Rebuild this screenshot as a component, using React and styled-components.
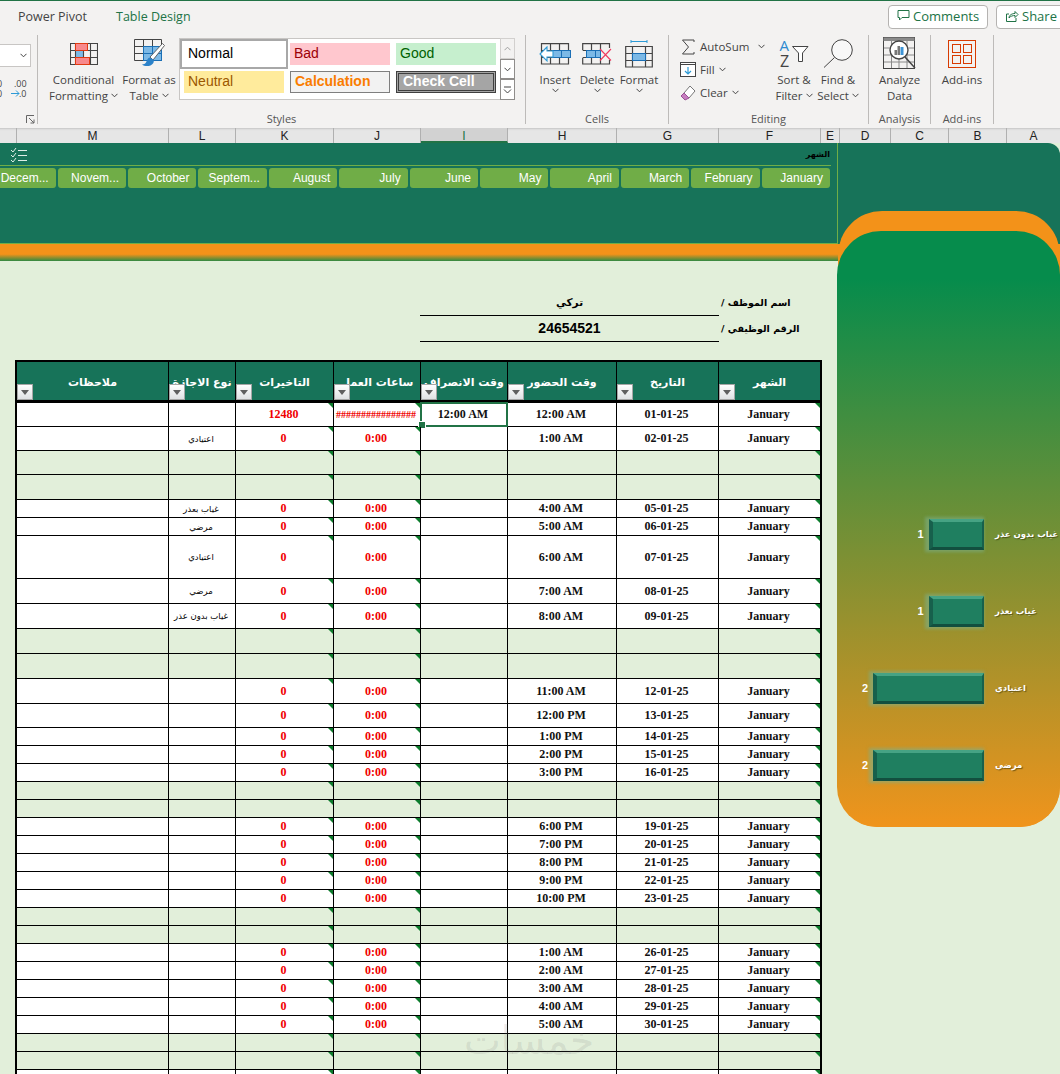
import React from 'react';
import styled, { createGlobalStyle } from 'styled-components';

const GlobalStyle = createGlobalStyle`
  html, body {
    margin: 0;
    padding: 0;
    background: #e2efda;
  }
  * {
    box-sizing: border-box;
  }
`;

const ARABIC = '"DejaVu Sans", sans-serif';
const UI = '"Open Sans", "Noto Sans", sans-serif';

const Page = styled.div`
  width: 1060px;
  height: 1074px;
  overflow: hidden;
  display: flex;
  flex-direction: column;
  font-family: "Liberation Sans", sans-serif;
`;

/* ---------- ribbon ---------- */

const Ribbon = styled.div`
  height: 128px;
  flex: none;
  background: #f3f2f1;
  border-top: 1px solid #217346;
  font-family: ${UI};
  font-size: 11.5px;
  color: #444;
`;

const TabBar = styled.div`
  height: 31px;
  display: flex;
  align-items: center;
  padding-left: 18px;
`;

const Tab = styled.span`
  font-size: 12.5px;
  margin-right: 29px;
  color: ${(p) => (p.$active ? '#217346' : '#444')};
`;

const TabActions = styled.div`
  margin-left: auto;
  display: flex;
  gap: 8px;
  margin-right: -20px;
`;

const ActionButton = styled.div`
  width: ${(p) => p.$w}px;
  height: 24px;
  display: flex;
  align-items: center;
  gap: 3px;
  padding: 0 0 2px 8px;
  background: #fff;
  border: 1px solid #b5b3b1;
  border-radius: 4px;
  color: #217346;
  font-size: 13px;
`;

const Toolbar = styled.div`
  display: flex;
  padding-top: 3px;
`;

const Group = styled.div`
  width: ${(p) => p.$w}px;
  height: 89px;
  flex: none;
  position: relative;
  display: flex;
  flex-direction: column;
  border-right: 1px solid #bdbbb9;
`;

const GroupBody = styled.div`
  flex: 1;
  display: flex;
  padding-left: ${(p) => p.$pad || 0}px;
`;

const GroupLabel = styled.div`
  height: 11px;
  text-align: center;
  font-size: 11px;
  line-height: 11px;
  color: #555;
`;

const Launcher = styled.svg`
  position: absolute;
  right: 2px;
  bottom: 0;
`;

const BigButton = styled.div`
  width: ${(p) => p.$w}px;
  flex: none;
  display: flex;
  flex-direction: column;
  align-items: center;
  text-align: center;
  line-height: 16px;
  white-space: nowrap;
`;

const IconSlot = styled.div`
  height: 37px;
  display: flex;
  align-items: center;
  justify-content: center;
`;

const SmallStack = styled.div`
  width: 92px;
  flex: none;
  display: flex;
  flex-direction: column;
`;

const SmallRow = styled.div`
  height: 23px;
  display: flex;
  align-items: center;
  gap: 4px;
  white-space: nowrap;
`;

const SmallIcon = styled.span`
  width: 16px;
  display: flex;
  justify-content: center;
`;

const Caret = styled.svg`
  margin-left: ${(p) => p.$gap ?? 3}px;
  vertical-align: 2px;
`;

const NumberColumn = styled.div`
  display: flex;
  flex-direction: column;
  gap: 11px;
  padding-top: 9px;
`;

const NumberBox = styled.div`
  width: 31px;
  height: 23px;
  background: #fff;
  border: 1px solid #c8c6c4;
  border-left: none;
  display: flex;
  align-items: center;
  justify-content: flex-end;
  padding-right: 3px;
`;

const Gallery = styled.div`
  width: 321px;
  height: 62px;
  margin: 3px 0 0 3px;
  padding: 4px 0 0 4px;
  background: #fff;
  border: 1px solid #c8c6c4;
  border-right: none;
  display: grid;
  grid-template-columns: 100px 100px 100px;
  grid-auto-rows: 22px;
  column-gap: 6px;
  row-gap: 6px;
`;

const StyleChip = styled.div`
  display: flex;
  align-items: center;
  padding: 0 0 2px 4px;
  font-family: "Liberation Sans", sans-serif;
  font-size: 14px;
  font-weight: ${(p) => (p.$bold ? 700 : 400)};
  color: ${(p) => p.$color};
  background: ${(p) => p.$bg};
  border: ${(p) => p.$border || 'none'};
  box-shadow: ${(p) => p.$shadow || 'none'};
`;

const GalleryScroll = styled.div`
  width: 15px;
  height: 62px;
  margin-top: 3px;
  display: flex;
  flex-direction: column;
`;

const ScrollButton = styled.div`
  flex: 1;
  display: flex;
  align-items: center;
  justify-content: center;
  background: ${(p) => (p.$off ? '#f3f2f1' : '#fff')};
  border: 1px solid;
  border-color: ${(p) => (p.$off ? '#d2d0ce' : '#8f8d8b')};
`;

/* ---------- column letters ---------- */

const ColumnBar = styled.div`
  height: 15px;
  flex: none;
  display: flex;
  overflow: hidden;
  background: #e6e6e6;
  box-shadow: inset 0 3px 2px -2px #c4c4c4;
`;

const ColumnLetter = styled.div`
  width: ${(p) => p.$w}px;
  flex: none;
  border-right: 1px solid #b0b0b0;
  text-align: center;
  font-size: 12px;
  line-height: 17px;
  color: ${(p) => (p.$active ? '#217346' : '#222')};
  background: ${(p) => (p.$active ? '#d2d2d2' : 'transparent')};
  border-bottom: ${(p) => (p.$active ? '2px solid #217346' : 'none')};
`;

/* ---------- sheet ---------- */

const Sheet = styled.div`
  flex: 1;
  position: relative;
  background: #e2efda;
`;

const Banner = styled.div`
  height: 101px;
  background: #177359;
  border-top-right-radius: 12px;
`;

const Slicer = styled.div`
  width: 838px;
  height: 101px;
  border-right: 1px solid #70ad47;
  border-bottom: 1px solid #70ad47;
  overflow: hidden;
`;

const SlicerHead = styled.div`
  height: 23px;
  margin-right: 6px;
  display: flex;
  align-items: center;
  justify-content: space-between;
  padding: 0 1px 0 11px;
  border-bottom: 1px solid #70ad47;
`;

const SlicerTitle = styled.span`
  font-family: ${ARABIC};
  font-size: 8px;
  font-weight: 700;
  color: #000;
`;

const SlicerButtons = styled.div`
  display: flex;
  justify-content: flex-end;
  gap: 2px;
  padding: 2px 7px 0 0;
`;

const MonthButton = styled.div`
  width: 68.4px;
  height: 20px;
  flex: none;
  border-radius: 3px;
  background: #70ad47;
  color: #fff;
  font-size: 12px;
  line-height: 20px;
  text-align: right;
  padding-right: 7px;
  white-space: nowrap;
`;

const Stripe = styled.div`
  height: 17px;
  background: linear-gradient(#f39219 0, #f39219 60%, #2f8a43 100%);
`;

const Main = styled.div`
  padding-top: 29px;
`;

const InfoBlock = styled.div`
  margin: 0 0 18px 420px;
`;

const InfoRow = styled.div`
  height: 26px;
  display: flex;
  align-items: center;
`;

const InfoValue = styled.div`
  width: 299px;
  height: 26px;
  border-bottom: 1px solid #000;
  text-align: center;
  line-height: 24px;
  font-weight: 700;
  font-family: ${(p) => (p.$arabic ? ARABIC : '"Liberation Sans", sans-serif')};
  font-size: ${(p) => (p.$arabic ? 10.5 : 14)}px;
`;

const InfoLabel = styled.span`
  margin: 0 0 2px 2px;
  font-family: ${ARABIC};
  font-size: 9.5px;
  font-weight: 700;
  color: #000;
`;

const Table = styled.div`
  width: 807px;
  margin-left: 15px;
  border: 2px solid #000;
  border-bottom: none;
`;

const COLUMNS = '152px 67px 98px 87px 87px 109px 102px 101px';

const HeadRow = styled.div`
  display: grid;
  grid-template-columns: ${COLUMNS};
  height: 41px;
  background: #177359;
  border-bottom: 3px solid #000;
`;

const HeadCell = styled.div`
  position: relative;
  overflow: hidden;
  border-right: ${(p) => (p.$last ? 'none' : '1px solid #000')};
  display: flex;
  align-items: center;
  justify-content: center;
  padding-top: 3px;
  color: #fff;
  font-family: ${ARABIC};
  font-size: 11px;
  font-weight: 700;
  white-space: nowrap;
`;

const FilterButton = styled.div`
  position: absolute;
  left: 0;
  bottom: 0;
  width: 16px;
  height: 16px;
  display: flex;
  align-items: center;
  justify-content: center;
  background: linear-gradient(#fff, #dfe1e3);
  border: 1px solid #a6a6a6;

  &::after {
    content: '';
    border-left: 4px solid transparent;
    border-right: 4px solid transparent;
    border-top: 5px solid #5f5f5f;
  }
`;

const BodyRow = styled.div`
  display: grid;
  grid-template-columns: ${COLUMNS};
  height: ${(p) => p.$h}px;
  background: ${(p) => (p.$blank ? 'transparent' : '#fff')};
  border-bottom: 1px solid #000;
`;

const Cell = styled.div`
  position: relative;
  border-right: ${(p) => (p.$last ? 'none' : '1px solid #000')};
  display: flex;
  align-items: center;
  justify-content: center;
  padding-right: 2px;
  white-space: nowrap;
  overflow: ${(p) => (p.$selected ? 'visible' : 'hidden')};
  font-family: "Liberation Serif", serif;
  font-size: 12px;
  font-weight: 700;
  color: ${(p) => (p.$red ? '#f00000' : '#111')};

  ${(p) =>
    p.$flag &&
    `
    &::before {
      content: '';
      position: absolute;
      top: 0;
      right: 0;
      border-top: 5px solid #0c7c2c;
      border-left: 5px solid transparent;
    }
  `}
`;

const TypeText = styled.span`
  font-family: ${ARABIC};
  font-size: 8.5px;
  font-weight: 400;
  color: #000;
`;

const Hashes = styled.span`
  font-size: 10px;
`;

const Selection = styled.div`
  position: absolute;
  inset: -1px;
  border: 2px solid #217346;

  &::after {
    content: '';
    position: absolute;
    left: -4px;
    bottom: -4px;
    width: 6px;
    height: 6px;
    background: #217346;
    border: 1px solid #fff;
  }
`;

const Watermark = styled.div`
  position: absolute;
  left: 464px;
  top: 870px;
  font-family: ${ARABIC};
  font-size: 39px;
  line-height: 56px;
  color: rgba(110, 110, 110, 0.15);
  pointer-events: none;
`;

/* ---------- side panel ---------- */

const SidePanel = styled.div`
  position: absolute;
  left: 838px;
  top: 68px;
  width: 222px;
  height: 616px;
  background: #f39219;
  border-radius: 44px 44px 40px 40px;
  padding-top: 20px;
`;

const SideInner = styled.div`
  height: 596px;
  margin-left: -1px;
  padding-top: 288px;
  background: linear-gradient(#068c4c 8%, #f0941c 100%);
  border-radius: 44px 44px 40px 40px;
  display: flex;
  flex-direction: column;
  gap: 47px;
`;

const BarRow = styled.div`
  height: 30px;
  display: flex;
  align-items: center;
`;

const BarTrack = styled.div`
  width: 147px;
  flex: none;
  display: flex;
  align-items: center;
  justify-content: flex-end;
  gap: 5px;
`;

const BarCount = styled.span`
  color: #fff;
  font-size: 11px;
  font-weight: 700;
`;

const Bar = styled.div`
  height: 31px;
  background: #1f7f60;
  border-style: solid;
  border-width: 3px 2px 3px 4px;
  border-color: #46a384 #17604c #124f3f #17604c;
  box-shadow: -2px 0 3px 2px rgba(125, 175, 135, 0.6);
`;

const BarLabel = styled.span`
  margin-left: 11px;
  font-family: ${ARABIC};
  font-size: 8.5px;
  font-weight: 700;
  color: #fff;
  text-shadow: 1px 1px 1px rgba(40, 40, 0, 0.55);
  white-space: nowrap;
`;

/* ---------- icons ---------- */

const INK = '#444';
const BLUE = '#7cb9e6';
const BLUE_LINE = '#1b6fb5';

const Chevron = ({ gap, color = INK }) => (
  <Caret $gap={gap} width="7" height="5" viewBox="0 0 7 5">
    <path d="M.5.8 3.5 3.8 6.5.8" fill="none" stroke={color} strokeWidth="1" />
  </Caret>
);

const CondIcon = () => (
  <svg width="28" height="22" viewBox="0 0 28 22">
    <rect x="5.5" y="7.5" width="8" height="7" fill={BLUE} />
    <path d="M.5.500H27.500V21.500H.5ZM.5 7.500H27.500M.5 14.500H27.500M5.500.5V21.500M13.500.5V21.500M20.500.5V21.500" fill="none" stroke={INK} strokeWidth="1.100" />
    <rect x="5.5" y=".5" width="12" height="7" fill="#f8898c" stroke="#e03a12" />
    <rect x="5.5" y="14.5" width="14" height="7" fill="#f8898c" stroke="#e03a12" />
  </svg>
);

const TableIcon = () => (
  <svg width="31" height="29" viewBox="0 0 31 29">
    <path d="M9.500.5V21.500M18.500.5V7M.5 7.500H9M.5 14.500H9M.5.5H27.500V7" fill="none" stroke={INK} />
    <path d="M.5.5V21.500H9.500" fill="none" stroke={INK} />
    <rect x="9.500" y="7.500" width="18" height="14" fill={BLUE} stroke={BLUE_LINE} />
    <path d="M18.500 7.500V21.500M9.500 14.500H27.500" stroke={BLUE_LINE} fill="none" />
    <path d="M28.500 4.500 16 18l3 3L30.500 6.500Z" fill="#fff" stroke="#555" strokeWidth=".9" />
    <path d="M15.500 18.500c-2 .5-2.500 3-3.500 5-.5 1-2.500 2-4 2 3 2.500 9 2 11-1 1-1.500 1-3 .5-4Z" fill="#2c82c9" />
  </svg>
);

const InsertIcon = () => (
  <svg width="32" height="22" viewBox="0 0 32 22">
    <path d="M2.500.7H29.500V21H2.500ZM11.500.7V21M20.500.7V21M2.500 7.500H29.500M2.500 14.500H29.500" fill="none" stroke={INK} strokeWidth="1.200" />
    <rect x="13.500" y="7.500" width="18" height="7" fill={BLUE} stroke={BLUE_LINE} />
    <path d="M22.500 7.500V14.500" stroke={BLUE_LINE} />
    <path d="M8 4 1 11l7 7V14H14V8H8Z" fill="#fff" stroke="#2c9ad6" strokeWidth="1.100" />
  </svg>
);

const DeleteIcon = () => (
  <svg width="30" height="22" viewBox="0 0 30 22">
    <path d="M.7 7V.7H27.500V5M.7 15V21H27.500V17M9.500.7V7M18.500.7V7M9.500 15V21M18.500 15V21M.7 7.500H4M.7 14.500H4" fill="none" stroke={INK} strokeWidth="1.200" />
    <rect x="4.500" y="7.500" width="14" height="7" fill={BLUE} stroke={BLUE_LINE} />
    <path d="M13.500 7.500V14.500" stroke={BLUE_LINE} />
    <path d="M18 6 29 17.500M29 6 18 17.500" stroke="#f03a5f" strokeWidth="1.100" />
  </svg>
);

const FormatIcon = () => (
  <svg width="28" height="28" viewBox="0 0 28 28">
    <path d="M6 1.500H22M6 0v3M22 0v3" stroke="#2c9ad6" fill="none" />
    <path d="M.7 6.500H27.300V27H.7ZM7.500 6.500V27M20.500 6.500V27M.7 13.500H27.300M.7 20.500H27.300" fill="none" stroke={INK} strokeWidth="1.200" />
    <rect x="7.500" y="13.500" width="13" height="7" fill={BLUE} stroke={BLUE_LINE} />
  </svg>
);

const SigmaIcon = () => (
  <svg width="14" height="16" viewBox="0 0 14 16">
    <path d="M13 3V1H1.500L7.500 8 1.500 15H13V13" fill="none" stroke={INK} />
  </svg>
);

const FillIcon = () => (
  <svg width="16" height="15" viewBox="0 0 16 15">
    <rect x=".5" y=".5" width="15" height="14" fill="#fff" stroke={INK} />
    <path d="M.5 2.500H15.500" stroke={INK} />
    <path d="M8 5v6.500M5 9l3 3 3-3" fill="none" stroke="#2c9ad6" strokeWidth="1.200" />
  </svg>
);

const ClearIcon = () => (
  <svg width="16" height="16" viewBox="0 0 16 16">
    <path d="M10 1 15 6 9 13 4 8Z" fill="#fff" stroke="#777" />
    <path d="M4 8 1 11l4 4 4-2Z" fill="#c77fc0" stroke="#9b4f96" />
    <path d="M4 8l5 5" stroke="#9b4f96" />
  </svg>
);

const SortIcon = () => (
  <svg width="30" height="29" viewBox="0 0 30 29">
    <text x="0.500" y="12" fontFamily="Open Sans, sans-serif" fontSize="15" fill="#2c8ad0">A</text>
    <text x="1" y="28" fontFamily="Open Sans, sans-serif" fontSize="16" fill={INK}>Z</text>
    <path d="M13.500 7.500H29L23.500 14V22.500H19.500V14Z" fill="#fff" stroke={INK} />
  </svg>
);

const FindIcon = () => (
  <svg width="31" height="29" viewBox="0 0 31 29">
    <circle cx="19" cy="11" r="10.300" fill="#f8f8f8" stroke={INK} />
    <path d="M11.500 18.500 1 28.500" stroke={INK} />
  </svg>
);

const AnalyzeIcon = () => (
  <svg width="33" height="33" viewBox="0 0 33 33">
    <rect x=".5" y=".5" width="31" height="31" fill="#f3f2f1" stroke={INK} />
    <rect x=".5" y=".5" width="31" height="3.500" fill="#8a8a8a" />
    <path d="M8.500 4V31M16 4V31M24 4V31M1 11H31M1 18H31M1 25H31" stroke="#8a8a8a" fill="none" />
    <circle cx="16" cy="13" r="9" fill="#fff" stroke={INK} strokeWidth="1.400" />
    <rect x="11.500" y="13" width="2.500" height="5" fill="#777" />
    <rect x="14.500" y="9" width="2.500" height="9" fill="#777" />
    <rect x="17.500" y="10" width="3" height="8" fill="#3d94d6" />
    <path d="M22 20 32 31" stroke={INK} strokeWidth="1.500" />
  </svg>
);

const AddInsIcon = () => (
  <svg width="28" height="28" viewBox="0 0 28 28">
    <rect x=".5" y=".5" width="27" height="27" fill="none" stroke="#d83b01" />
    <rect x="4.500" y="4.500" width="8" height="8" fill="none" stroke="#d83b01" />
    <rect x="15.500" y="4.500" width="8" height="8" fill="none" stroke="#d83b01" />
    <rect x="4.500" y="15.500" width="8" height="8" fill="none" stroke="#d83b01" />
    <rect x="15.500" y="15.500" width="8" height="8" fill="none" stroke="#d83b01" />
  </svg>
);

const CommentIcon = () => (
  <svg width="13" height="13" viewBox="0 0 13 13">
    <path d="M1 1.500H12V8.500H5L2.500 11V8.500H1Z" fill="none" stroke="#217346" />
  </svg>
);

const ShareIcon = () => (
  <svg width="14" height="14" viewBox="0 0 14 14">
    <path d="M4 5H1.500V12.500H11V9" fill="none" stroke="#217346" />
    <path d="M4 9c0-3 3-4.500 6-4.500V2.500L13 5.500 10 8.500V6.500C8 6.500 5.500 7 4 9Z" fill="none" stroke="#217346" />
  </svg>
);

const DecimalIcon = () => (
  <svg width="31" height="22" viewBox="0 0 31 22">
    <text x="-3" y="9" fontSize="9" fontFamily="Open Sans, sans-serif" fill={INK}>0</text>
    <text x="-3" y="19" fontSize="9" fontFamily="Open Sans, sans-serif" fill={INK}>0</text>
    <text x="14" y="9" fontSize="9" fontFamily="Open Sans, sans-serif" fill={INK}>.00</text>
    <text x="19" y="19" fontSize="9" fontFamily="Open Sans, sans-serif" fill={INK}>.0</text>
    <path d="M11 15.500H19M16 12.500l3 3-3 3" fill="none" stroke="#2c9ad6" />
  </svg>
);

const ChecklistIcon = () => (
  <svg width="16" height="15" viewBox="0 0 16 15">
    <path d="M0 3l2 2 3-4M0 8l2 2 3-4M0 13l2 2 3-4" fill="none" stroke="#dfeee6" />
    <path d="M7 3.500H16M7 8.500H16M7 13.500H16" stroke="#dfeee6" />
  </svg>
);

/* ---------- data ---------- */

const LETTERS = [
  ['', 17], ['M', 152], ['L', 67], ['K', 98], ['J', 87], ['I', 87], ['H', 109],
  ['G', 102], ['F', 102], ['E', 19], ['D', 51], ['C', 58], ['B', 58], ['A', 54],
];

const MONTHS = [
  'Decem...', 'Novem...', 'October', 'Septem...', 'August', 'July', 'June',
  'May', 'April', 'March', 'February', 'January',
];

const HEADERS = [
  'ملاحظات', 'نوع الاجازة', 'التاخيرات', 'ساعات العمل', 'وقت الانصراف',
  'وقت الحضور', 'التاريخ', 'الشهر',
];

const day = (h, date, time, type = '') => ({ h, date, time, type });
const blank = (h) => ({ h, blank: true });

const ROWS = [
  { h: 24, date: '01-01-25', time: '12:00 AM', out: '12:00 AM', hours: '################', late: '12480' },
  day(24, '02-01-25', '1:00 AM', 'اعتيادي'),
  blank(24),
  blank(25),
  day(18, '05-01-25', '4:00 AM', 'غياب بعذر'),
  day(18, '06-01-25', '5:00 AM', 'مرضي'),
  day(43, '07-01-25', '6:00 AM', 'اعتيادي'),
  day(25, '08-01-25', '7:00 AM', 'مرضي'),
  day(25, '09-01-25', '8:00 AM', 'غياب بدون عذر'),
  blank(25),
  blank(25),
  day(25, '12-01-25', '11:00 AM'),
  day(24, '13-01-25', '12:00 PM'),
  day(18, '14-01-25', '1:00 PM'),
  day(18, '15-01-25', '2:00 PM'),
  day(18, '16-01-25', '3:00 PM'),
  blank(18),
  blank(18),
  day(18, '19-01-25', '6:00 PM'),
  day(18, '20-01-25', '7:00 PM'),
  day(18, '21-01-25', '8:00 PM'),
  day(18, '22-01-25', '9:00 PM'),
  day(18, '23-01-25', '10:00 PM'),
  blank(18),
  blank(18),
  day(18, '26-01-25', '1:00 AM'),
  day(18, '27-01-25', '2:00 AM'),
  day(18, '28-01-25', '3:00 AM'),
  day(18, '29-01-25', '4:00 AM'),
  day(18, '30-01-25', '5:00 AM'),
  blank(18),
  blank(18),
  { h: 20 },
];

const BARS = [
  ['غياب بدون عذر', 1],
  ['غياب بعذر', 1],
  ['اعتيادي', 2],
  ['مرضي', 2],
];

function Row({ row, first }) {
  const filled = row.date !== undefined;
  return (
    <BodyRow $h={row.h} $blank={row.blank}>
      <Cell />
      <Cell>{row.type && <TypeText dir="rtl">{row.type}</TypeText>}</Cell>
      <Cell $flag $red>{filled && (row.late || '0')}</Cell>
      <Cell $flag $red>
        {filled && (row.hours ? <Hashes>{row.hours}</Hashes> : '0:00')}
      </Cell>
      <Cell $selected={first}>
        {row.out}
        {first && <Selection />}
      </Cell>
      <Cell>{row.time}</Cell>
      <Cell>{row.date}</Cell>
      <Cell $flag $last>{filled && 'January'}</Cell>
    </BodyRow>
  );
}

export default function App() {
  return (
    <Page>
      <GlobalStyle />
      <Ribbon>
        <TabBar>
          <Tab>Power Pivot</Tab>
          <Tab $active>Table Design</Tab>
          <TabActions>
            <ActionButton $w={100}><CommentIcon />Comments</ActionButton>
            <ActionButton $w={84}><ShareIcon />Share</ActionButton>
          </TabActions>
        </TabBar>
        <Toolbar>
          <Group $w={38}>
            <GroupBody>
              <NumberColumn>
                <NumberBox><Chevron gap={0} /></NumberBox>
                <DecimalIcon />
              </NumberColumn>
            </GroupBody>
            <Launcher width="9" height="9" viewBox="0 0 9 9">
              <path d="M.5 8V.5H8M3 3l5 5M8 4.500V8H4.500" fill="none" stroke="#666" />
            </Launcher>
          </Group>

          <Group $w={488}>
            <GroupBody $pad={7}>
              <BigButton $w={77}>
                <IconSlot><CondIcon /></IconSlot>
                Conditional
                <span>Formatting<Chevron /></span>
              </BigButton>
              <BigButton $w={54}>
                <IconSlot><TableIcon /></IconSlot>
                Format as
                <span>Table<Chevron /></span>
              </BigButton>
              <Gallery>
                <StyleChip $color="#000" $bg="#fff" $shadow="0 0 0 2px #fff, 0 0 0 4px #a8a8a8">Normal</StyleChip>
                <StyleChip $color="#9c0006" $bg="#ffc7ce">Bad</StyleChip>
                <StyleChip $color="#006100" $bg="#c6efce">Good</StyleChip>
                <StyleChip $color="#9c5700" $bg="#ffeb9c">Neutral</StyleChip>
                <StyleChip $color="#fa7d00" $bg="#f2f2f2" $bold $border="1px solid #7f7f7f">Calculation</StyleChip>
                <StyleChip $color="#fff" $bg="#a5a5a5" $bold $border="3px double #3f3f3f">Check Cell</StyleChip>
              </Gallery>
              <GalleryScroll>
                <ScrollButton $off>
                  <Caret $gap={0} width="7" height="5" viewBox="0 0 7 5">
                    <path d="M.5 4.200 3.500 1.200 6.500 4.200" fill="none" stroke="#a0a0a0" />
                  </Caret>
                </ScrollButton>
                <ScrollButton><Chevron gap={0} /></ScrollButton>
                <ScrollButton>
                  <Caret $gap={0} width="9" height="8" viewBox="0 0 9 8">
                    <path d="M1 1H8M1 3.500 4.500 7 8 3.500" fill="none" stroke={INK} />
                  </Caret>
                </ScrollButton>
              </GalleryScroll>
            </GroupBody>
            <GroupLabel>Styles</GroupLabel>
          </Group>

          <Group $w={143}>
            <GroupBody $pad={8}>
              <BigButton $w={42}>
                <IconSlot><InsertIcon /></IconSlot>
                Insert
                <Chevron gap={0} />
              </BigButton>
              <BigButton $w={42}>
                <IconSlot><DeleteIcon /></IconSlot>
                Delete
                <Chevron gap={0} />
              </BigButton>
              <BigButton $w={42}>
                <IconSlot><FormatIcon /></IconSlot>
                Format
                <Chevron gap={0} />
              </BigButton>
            </GroupBody>
            <GroupLabel>Cells</GroupLabel>
          </Group>

          <Group $w={200}>
            <GroupBody $pad={11}>
              <SmallStack>
                <SmallRow><SmallIcon><SigmaIcon /></SmallIcon>AutoSum<Chevron gap={5} /></SmallRow>
                <SmallRow><SmallIcon><FillIcon /></SmallIcon>Fill<Chevron gap={0} /></SmallRow>
                <SmallRow><SmallIcon><ClearIcon /></SmallIcon>Clear<Chevron gap={0} /></SmallRow>
              </SmallStack>
              <BigButton $w={44}>
                <IconSlot><SortIcon /></IconSlot>
                Sort &amp;
                <span>Filter<Chevron /></span>
              </BigButton>
              <BigButton $w={44}>
                <IconSlot><FindIcon /></IconSlot>
                Find &amp;
                <span>Select<Chevron /></span>
              </BigButton>
            </GroupBody>
            <GroupLabel>Editing</GroupLabel>
          </Group>

          <Group $w={62}>
            <GroupBody>
              <BigButton $w={61}>
                <IconSlot><AnalyzeIcon /></IconSlot>
                Analyze
                <span>Data</span>
              </BigButton>
            </GroupBody>
            <GroupLabel>Analysis</GroupLabel>
          </Group>

          <Group $w={63}>
            <GroupBody>
              <BigButton $w={62}>
                <IconSlot><AddInsIcon /></IconSlot>
                Add-ins
              </BigButton>
            </GroupBody>
            <GroupLabel>Add-ins</GroupLabel>
          </Group>
        </Toolbar>
      </Ribbon>

      <ColumnBar>
        {LETTERS.map(([letter, width]) => (
          <ColumnLetter key={letter || 'n'} $w={width} $active={letter === 'I'}>{letter}</ColumnLetter>
        ))}
      </ColumnBar>

      <Sheet>
        <Banner>
          <Slicer>
            <SlicerHead>
              <ChecklistIcon />
              <SlicerTitle dir="rtl">الشهر</SlicerTitle>
            </SlicerHead>
            <SlicerButtons>
              {MONTHS.map((m) => <MonthButton key={m}>{m}</MonthButton>)}
            </SlicerButtons>
          </Slicer>
        </Banner>
        <Stripe />

        <Main>
          <InfoBlock>
            <InfoRow>
              <InfoValue $arabic dir="rtl">تركي</InfoValue>
              <InfoLabel dir="rtl">اسم الموظف /</InfoLabel>
            </InfoRow>
            <InfoRow>
              <InfoValue>24654521</InfoValue>
              <InfoLabel dir="rtl">الرقم الوظيفي /</InfoLabel>
            </InfoRow>
          </InfoBlock>

          <Table>
            <HeadRow>
              {HEADERS.map((h, i) => (
                <HeadCell key={h} $last={i === HEADERS.length - 1}>
                  <span dir="rtl">{h}</span>
                  <FilterButton />
                </HeadCell>
              ))}
            </HeadRow>
            {ROWS.map((row, i) => <Row key={i} row={row} first={i === 0} />)}
          </Table>
        </Main>

        <Watermark dir="rtl">خمسات</Watermark>

        <SidePanel>
          <SideInner>
            {BARS.map(([label, count]) => (
              <BarRow key={label}>
                <BarTrack>
                  <BarCount>{count}</BarCount>
                  <Bar style={{ width: count * 55.5 }} />
                </BarTrack>
                <BarLabel dir="rtl">{label}</BarLabel>
              </BarRow>
            ))}
          </SideInner>
        </SidePanel>
      </Sheet>
    </Page>
  );
}
